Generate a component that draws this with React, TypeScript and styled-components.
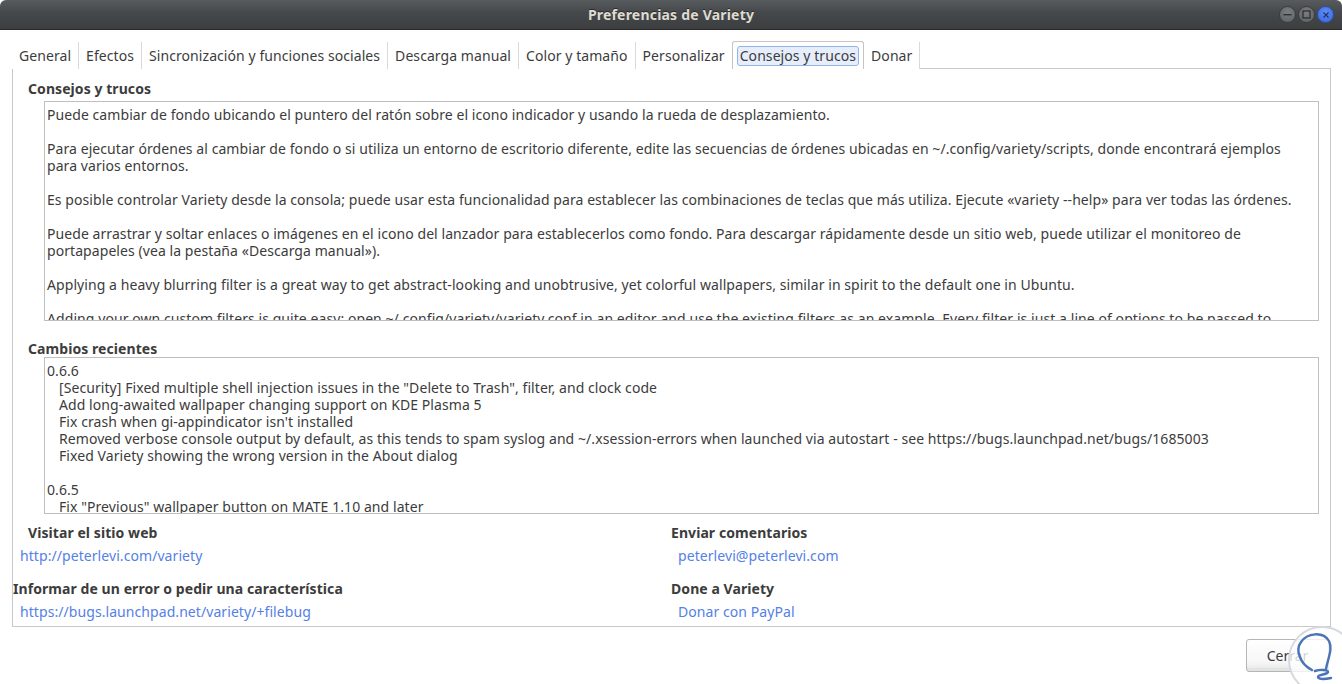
import React from "react";
import styled, { createGlobalStyle } from "styled-components";

const Global = createGlobalStyle`
  html, body { margin: 0; padding: 0; background: #ffffff; }
  body {
    width: 1342px; height: 684px; overflow: hidden;
    font-family: "Noto Sans", "Open Sans", sans-serif;
    font-size: 14px; color: #3c3c3c;
    letter-spacing: 0.07px;
  }
  * { box-sizing: border-box; }
`;

const Window = styled.div`
  position: relative;
  width: 1342px;
  height: 684px;
  display: flex;
  flex-direction: column;
  background: #ffffff;
  overflow: hidden;
`;

const TitleBar = styled.header`
  flex: none;
  height: 30px;
  display: grid;
  grid-template-columns: 1fr auto 1fr;
  align-items: center;
  background: linear-gradient(#585b5d 0%, #45484a 45%, #3c3e40 100%);
  border-bottom: 1px solid #2b2b2b;
  border-radius: 6px 6px 0 0;
`;

const Title = styled.h1`
  grid-column: 2;
  margin: 0;
  font-size: 14px;
  font-weight: 700;
  color: #dfdbd2;
  text-shadow: 0 -1px 0 #2a2a2a;
  letter-spacing: 0.2px;
`;

const WinButtons = styled.div`
  grid-column: 3;
  justify-self: end;
  display: flex;
  gap: 2px;
  margin-right: 8px;
`;

const WinButton = styled.button<{ $close?: boolean }>`
  width: 17px;
  height: 17px;
  padding: 0;
  border-radius: 50%;
  border: 1px solid ${(p) => (p.$close ? "#2d4fa8" : "#3a3c3d")};
  background: ${(p) =>
    p.$close
      ? "radial-gradient(circle at 50% 35%, #5f8cf4, #3765e0)"
      : "radial-gradient(circle at 50% 35%, #7b7e80, #5d6062)"};
  display: flex;
  align-items: center;
  justify-content: center;
`;

const Body = styled.main`
  flex: 1;
  display: flex;
  flex-direction: column;
  padding-top: 12px;
`;

const TabStrip = styled.nav`
  display: flex;
  height: 27px;
  margin-left: 12px;
  position: relative;
  z-index: 1;
`;

const Tab = styled.div<{ $active?: boolean; $sep?: boolean }>`
  display: flex;
  align-items: center;
  padding: ${(p) => (p.$active ? "0 4px" : "0 7px")};
  height: ${(p) => (p.$active ? "28px" : "27px")};
  margin-top: ${(p) => (p.$active ? "-1px" : "0")};
  font-size: 14px;
  color: #3c3c3c;
  white-space: nowrap;
  background: #ffffff;
  border-right: ${(p) => (p.$sep ? "1px solid #d9d9d9" : "none")};
  ${(p) =>
    p.$active
      ? `border: 1px solid #c4c4c4; border-bottom: none; border-radius: 3px 3px 0 0;`
      : ""}
`;

const TabFocus = styled.span`
  padding: 0 2px;
  line-height: 18px;
  border: 1px solid #93b3ea;
  border-radius: 3px;
  background: #e6eefb;
`;

const Frame = styled.section`
  width: 1319px;
  height: 559px;
  margin-left: 12px;
  margin-top: -1px;
  border: 1px solid #c9c9c9;
  display: flex;
  flex-direction: column;
`;

const SectionLabel = styled.h2<{ $top: number }>`
  margin: ${(p) => p.$top}px 0 0 15px;
  font-size: 14px;
  font-weight: 700;
  line-height: 17px;
  color: #3c3c3c;
`;

const TextView = styled.div<{ $h: number; $top: number; $pt: number }>`
  height: ${(p) => p.$h}px;
  margin: ${(p) => p.$top}px 11px 0 31px;
  padding: ${(p) => p.$pt}px 2px 0 2px;
  border: 1px solid #bfbfbf;
  background: #ffffff;
  overflow: hidden;
  font-size: 14px;
  line-height: 17px;
  color: #3c3c3c;
`;

const Para = styled.p`
  margin: 0 0 17px 0;
  white-space: pre;
`;

const VersionBlock = styled.div`
  & + & {
    margin-top: 17px;
  }
`;

const VersionLine = styled.div<{ $indent?: boolean }>`
  white-space: pre;
  padding-left: ${(p) => (p.$indent ? "12px" : "0")};
`;

const LinksGrid = styled.div`
  display: grid;
  grid-template-columns: 658px 1fr;
  row-gap: 16px;
  margin-top: 10px;
`;

const Field = styled.div`
  display: flex;
  flex-direction: column;
  gap: 6px;
`;

const FieldLabel = styled.h3<{ $indent: number }>`
  margin: 0 0 0 ${(p) => p.$indent}px;
  font-size: 14px;
  font-weight: 700;
  line-height: 17px;
  color: #3c3c3c;
  white-space: nowrap;
`;

const FieldLink = styled.a<{ $indent: number }>`
  margin-left: ${(p) => p.$indent}px;
  font-size: 14px;
  line-height: 17px;
  color: #5580e6;
  text-decoration: none;
  white-space: nowrap;
`;

const ButtonRow = styled.footer`
  display: flex;
  justify-content: flex-end;
  padding: 12px 13px 0 0;
`;

const CloseButton = styled.button`
  width: 83px;
  height: 33px;
  border: 1px solid #b5b5b5;
  border-radius: 3px;
  background: linear-gradient(#ffffff 0%, #f7f7f7 70%, #e6e6e6 100%);
  box-shadow: inset 0 -3px 0 #e3e3e3;
  font-family: "Noto Sans", "Open Sans", sans-serif;
  font-size: 14px;
  color: #3c3c3c;
  padding: 0;
`;

const Watermark = styled.svg`
  position: absolute;
  left: 1286px;
  top: 624px;
  width: 72px;
  height: 72px;
  pointer-events: none;
`;

const tips = [
  "Puede cambiar de fondo ubicando el puntero del ratón sobre el icono indicador y usando la rueda de desplazamiento.",
  "Para ejecutar órdenes al cambiar de fondo o si utiliza un entorno de escritorio diferente, edite las secuencias de órdenes ubicadas en ~/.config/variety/scripts, donde encontrará ejemplos\npara varios entornos.",
  "Es posible controlar Variety desde la consola; puede usar esta funcionalidad para establecer las combinaciones de teclas que más utiliza. Ejecute «variety --help» para ver todas las órdenes.",
  "Puede arrastrar y soltar enlaces o imágenes en el icono del lanzador para establecerlos como fondo. Para descargar rápidamente desde un sitio web, puede utilizar el monitoreo de\nportapapeles (vea la pestaña «Descarga manual»).",
  "Applying a heavy blurring filter is a great way to get abstract-looking and unobtrusive, yet colorful wallpapers, similar in spirit to the default one in Ubuntu.",
  "Adding your own custom filters is quite easy: open ~/.config/variety/variety.conf in an editor and use the existing filters as an example. Every filter is just a line of options to be passed to",
];

const versions = [
  {
    v: "0.6.6",
    items: [
      '[Security] Fixed multiple shell injection issues in the "Delete to Trash", filter, and clock code',
      "Add long-awaited wallpaper changing support on KDE Plasma 5",
      "Fix crash when gi-appindicator isn't installed",
      "Removed verbose console output by default, as this tends to spam syslog and ~/.xsession-errors when launched via autostart - see https://bugs.launchpad.net/bugs/1685003",
      "Fixed Variety showing the wrong version in the About dialog",
    ],
  },
  {
    v: "0.6.5",
    items: ['Fix "Previous" wallpaper button on MATE 1.10 and later'],
  },
];

const tabs = [
  "General",
  "Efectos",
  "Sincronización y funciones sociales",
  "Descarga manual",
  "Color y tamaño",
  "Personalizar",
  "Consejos y trucos",
  "Donar",
];
const activeTab = 6;

const fields = [
  { label: "Visitar el sitio web", li: 15, link: "http://peterlevi.com/variety", ki: 7 },
  { label: "Enviar comentarios", li: 0, link: "peterlevi@peterlevi.com", ki: 7 },
  { label: "Informar de un error o pedir una característica", li: 0, link: "https://bugs.launchpad.net/variety/+filebug", ki: 7 },
  { label: "Done a Variety", li: 0, link: "Donar con PayPal", ki: 7 },
];

export default function App() {
  return (
    <>
      <Global />
      <Window>
        <TitleBar>
          <Title>Preferencias de Variety</Title>
          <WinButtons>
            <WinButton aria-label="Minimizar">
              <svg width="9" height="9" viewBox="0 0 9 9">
                <rect x="0.5" y="4" width="8" height="1.4" fill="#2f3132" />
              </svg>
            </WinButton>
            <WinButton aria-label="Maximizar">
              <svg width="9" height="9" viewBox="0 0 9 9">
                <rect x="1" y="1" width="7" height="7" fill="none" stroke="#2f3132" strokeWidth="1.3" />
              </svg>
            </WinButton>
            <WinButton $close aria-label="Cerrar">
              <svg width="8" height="8" viewBox="0 0 8 8">
                <path d="M1.5 1.5 L6.5 6.5 M6.5 1.5 L1.5 6.5" stroke="#23336b" strokeWidth="1.2" />
              </svg>
            </WinButton>
          </WinButtons>
        </TitleBar>
        <Body>
          <TabStrip>
            {tabs.map((t, i) => (
              <Tab
                key={t}
                $active={i === activeTab}
                $sep={i !== activeTab && i !== activeTab - 1}
              >
                {i === activeTab ? <TabFocus>{t}</TabFocus> : t}
              </Tab>
            ))}
          </TabStrip>
          <Frame>
            <SectionLabel $top={11}>Consejos y trucos</SectionLabel>
            <TextView $h={220} $top={4} $pt={4}>
              {tips.map((t, i) => (
                <Para key={i}>{t}</Para>
              ))}
            </TextView>
            <SectionLabel $top={19}>Cambios recientes</SectionLabel>
            <TextView $h={157} $top={0} $pt={4}>
              {versions.map((b) => (
                <VersionBlock key={b.v}>
                  <VersionLine>{b.v}</VersionLine>
                  {b.items.map((it, i) => (
                    <VersionLine key={i} $indent>
                      {it}
                    </VersionLine>
                  ))}
                </VersionBlock>
              ))}
            </TextView>
            <LinksGrid>
              {fields.map((f) => (
                <Field key={f.label}>
                  <FieldLabel $indent={f.li}>{f.label}</FieldLabel>
                  <FieldLink $indent={f.ki} href="#">
                    {f.link}
                  </FieldLink>
                </Field>
              ))}
            </LinksGrid>
          </Frame>
          <ButtonRow>
            <CloseButton>Cerrar</CloseButton>
          </ButtonRow>
        </Body>
        <Watermark viewBox="0 0 72 72" aria-hidden="true">
          <circle cx="36" cy="36" r="33" fill="rgba(255,255,255,0.78)" stroke="#d6d9de" strokeWidth="2" />
          <path
            d="M26 46 C14 40 9 26 15 18 C21 9 37 7 43 17 C47 25 42 34 40 45 M29 47 C35 45 42 46 42 48 C41 51 32 50 32 53 C33 56 40 55 45 54"
            fill="none"
            stroke="#4a73b8"
            strokeWidth="2.4"
            strokeLinecap="round"
            strokeLinejoin="round"
          />
        </Watermark>
      </Window>
    </>
  );
}
